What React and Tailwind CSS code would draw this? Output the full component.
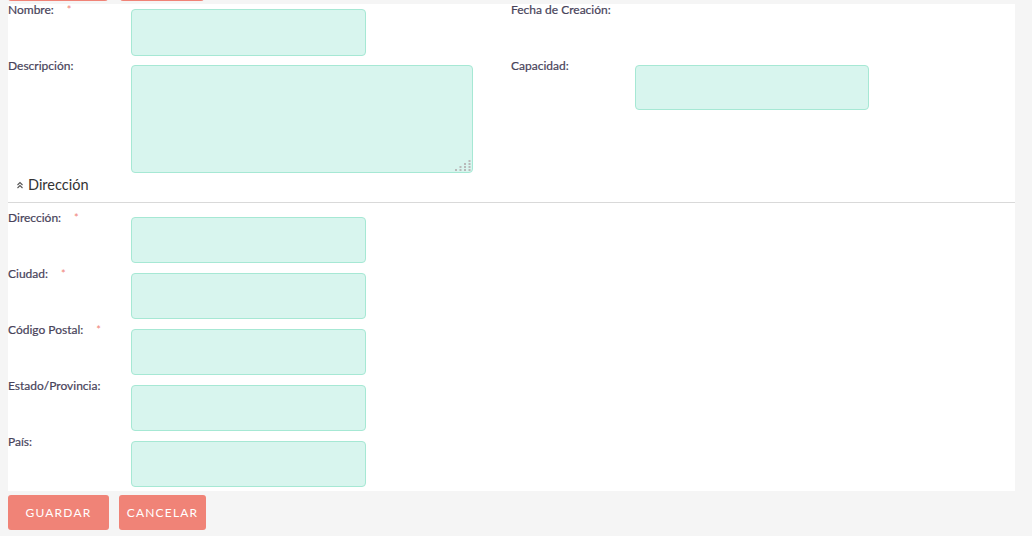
import React from 'react';

const Req = () => (
  <span className="ml-[13px] text-[11px] text-[#f08377] align-top [-webkit-text-stroke:0px_transparent]">*</span>
);

const Label = ({ children, req, w = 'w-[123px]' }) => (
  <div className={`${w} shrink-0 -mt-[2px] text-[12px] leading-4 text-[#48435a] [-webkit-text-stroke:0.2px_#48435a]`}>
    {children}
    {req && <Req />}
  </div>
);

const Input = ({ w = 'w-[235px]', h = 'h-[46px]' }) => (
  <div className={`${w} ${h} mt-[5px] shrink-0 rounded-[4px] border border-[#a6e8d4] bg-[#d8f5ee]`} />
);

const ResizeDots = () => {
  const dots = [];
  for (let r = 0; r < 4; r++) {
    for (let c = 3 - r; c < 4; c++) {
      dots.push(<rect key={`${r}-${c}`} x={c * 4.5} y={r * 3} width="2" height="2" fill="#b9b9b9" />);
    }
  }
  return (
    <svg className="absolute right-[1px] bottom-[1px]" width="16" height="11" viewBox="0 0 16 11">
      {dots}
    </svg>
  );
};

const Btn = ({ children, w }) => (
  <button className={`${w} h-[35px] rounded-[3px] bg-[#f08377] text-[12px] uppercase tracking-[1.2px] text-white`}>
    {children}
  </button>
);

export default function App() {
  const address = [
    { label: 'Dirección:', req: true },
    { label: 'Ciudad:', req: true },
    { label: 'Código Postal:', req: true },
    { label: 'Estado/Provincia:' },
    { label: 'País:' },
  ];

  return (
    <div className="flow-root min-h-screen bg-[#f5f5f5] pl-[8px] pr-[17px] font-['Lato','Noto_Sans',sans-serif]">
      {/* toolbar scrolled out of view */}
      <div className="-mt-[34px] flex gap-[12px]">
        <div className="h-[35px] w-[100px] rounded-[3px] bg-[#f08377]" />
        <div className="h-[35px] w-[84px] rounded-[3px] bg-[#f08377]" />
      </div>

      <div className="mt-[3px] bg-white pb-[4px]">
        {/* row 1 */}
        <div className="flex items-start">
          <div className="flex w-[503px] items-start">
            <Label req>Nombre:</Label>
            <Input h="h-[47px]" />
          </div>
          <div className="flex items-start">
            <Label w="w-[124px]">Fecha de Creación:</Label>
          </div>
        </div>

        {/* row 2 */}
        <div className="mt-[4px] flex items-start">
          <div className="flex w-[503px] items-start">
            <Label>Descripción:</Label>
            <div className="relative mt-[5px] h-[108px] w-[342px] rounded-[4px] border border-[#a6e8d4] bg-[#d8f5ee]">
              <ResizeDots />
            </div>
          </div>
          <div className="flex items-start">
            <Label w="w-[124px]">Capacidad:</Label>
            <Input w="w-[234px]" h="h-[45px]" />
          </div>
        </div>

        {/* section header */}
        <div className="mt-[2px] flex items-center gap-[4px] border-b border-[#d9d9d9] pb-[7px] pl-[8px] text-[14.5px] leading-5 text-[#333]">
          <svg width="8" height="8" viewBox="0 0 8 8" fill="none" stroke="#555" strokeWidth="1.1">
            <path d="M1.5 4 L4 1.5 L6.5 4" />
            <path d="M1.5 7 L4 4.5 L6.5 7" />
          </svg>
          <span>Dirección</span>
        </div>

        <div className="pt-[4px]">
          {address.map((f) => (
            <div key={f.label} className="mt-[5px] flex items-start">
              <Label req={f.req}>{f.label}</Label>
              <Input />
            </div>
          ))}
        </div>
      </div>

      <div className="mt-[4px] flex gap-[10px]">
        <Btn w="w-[101px]">Guardar</Btn>
        <Btn w="w-[87px]">Cancelar</Btn>
      </div>
    </div>
  );
}
